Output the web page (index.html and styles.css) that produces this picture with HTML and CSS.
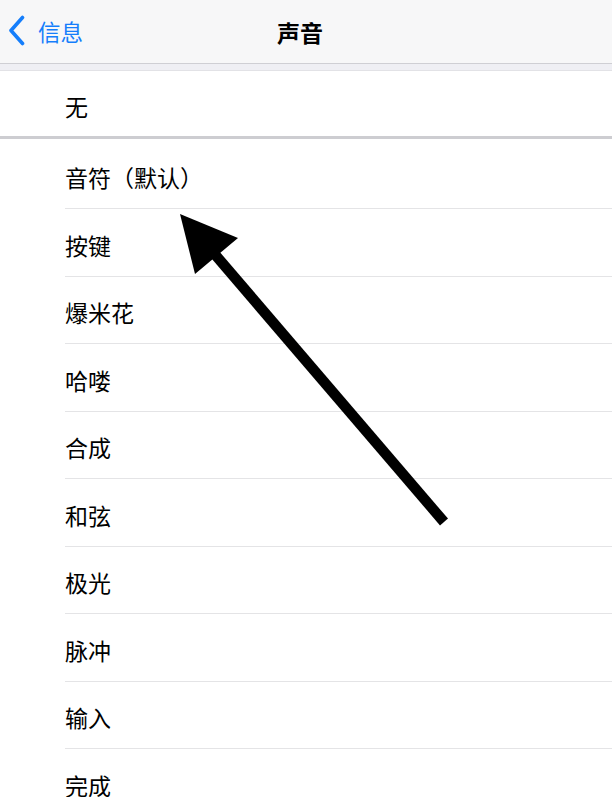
FILE: index.html
```html
<!DOCTYPE html>
<html lang="zh-CN">
<head>
<meta charset="utf-8">
<title>声音</title>
<link rel="stylesheet" href="styles.css">
</head>
<body>
<div class="page">
  <header class="nav">
    <div class="back">
      <svg class="chev" width="17" height="31" viewBox="0 0 17 31"><polyline points="14.5,2.5 3,15.5 14.5,28.5" fill="none" stroke="#157efb" stroke-width="3.6" stroke-linecap="round" stroke-linejoin="round"/></svg>
      <span class="back-label">信息</span>
    </div>
    <div class="title">声音</div>
  </header>
  <div class="gap"></div>
  <div class="group-none">
    <div class="row-none"><span class="label">无</span></div>
  </div>
  <ul class="list">
    <li class="row"><span class="label">音符（默认）</span></li>
    <li class="row"><span class="label">按键</span></li>
    <li class="row"><span class="label">爆米花</span></li>
    <li class="row"><span class="label">哈喽</span></li>
    <li class="row"><span class="label">合成</span></li>
    <li class="row"><span class="label">和弦</span></li>
    <li class="row"><span class="label">极光</span></li>
    <li class="row"><span class="label">脉冲</span></li>
    <li class="row"><span class="label">输入</span></li>
    <li class="row"><span class="label">完成</span></li>
  </ul>
  <svg class="arrow" width="612" height="797" viewBox="0 0 612 797">
    <line x1="206" y1="244" x2="444" y2="522" stroke="#000" stroke-width="10.5"/>
    <polygon points="180,214 238,238 195,274" fill="#000"/>
  </svg>
</div>
</body>
</html>
```

FILE: styles.css
```css
html, body {
  margin: 0;
  padding: 0;
  background: #ffffff;
}
body {
  font-family: "Noto Sans CJK SC", "Noto Sans", sans-serif;
  color: #000;
}
.page {
  position: relative;
  width: 612px;
  height: 797px;
  overflow: hidden;
}
.nav {
  height: 63px;
  background: #f7f7f8;
  border-bottom: 1px solid #cfcfd4;
  display: flex;
  align-items: center;
  justify-content: center;
  position: relative;
}
.back {
  position: absolute;
  left: 8px;
  top: 15px;
  display: flex;
  align-items: center;
  gap: 13px;
  color: #157efb;
}
.back-label {
  font-size: 22.5px;
  line-height: 30px;
}
.title {
  font-size: 23px;
  font-weight: 700;
  line-height: 30px;
  margin-right: 12px;
}
.gap {
  height: 7px;
  background: #efeff4;
  border-bottom: 1px solid #e2e2e6;
  box-sizing: border-box;
}
.group-none {
  border-bottom: 3px solid #cdcdd1;
}
.row-none {
  height: 65px;
  display: flex;
  align-items: center;
  padding-left: 65px;
  padding-top: 5px;
  box-sizing: border-box;
}
.label {
  font-size: 23px;
  line-height: 26px;
}
.list {
  list-style: none;
  margin: 0;
  padding: 2.5px 0 0 65px;
}
.row {
  height: 67.5px;
  box-sizing: border-box;
  border-bottom: 1px solid #e4e4e6;
  display: flex;
  align-items: center;
  padding-top: 5px;
}
.arrow {
  position: absolute;
  left: 0;
  top: 0;
  pointer-events: none;
}
```
